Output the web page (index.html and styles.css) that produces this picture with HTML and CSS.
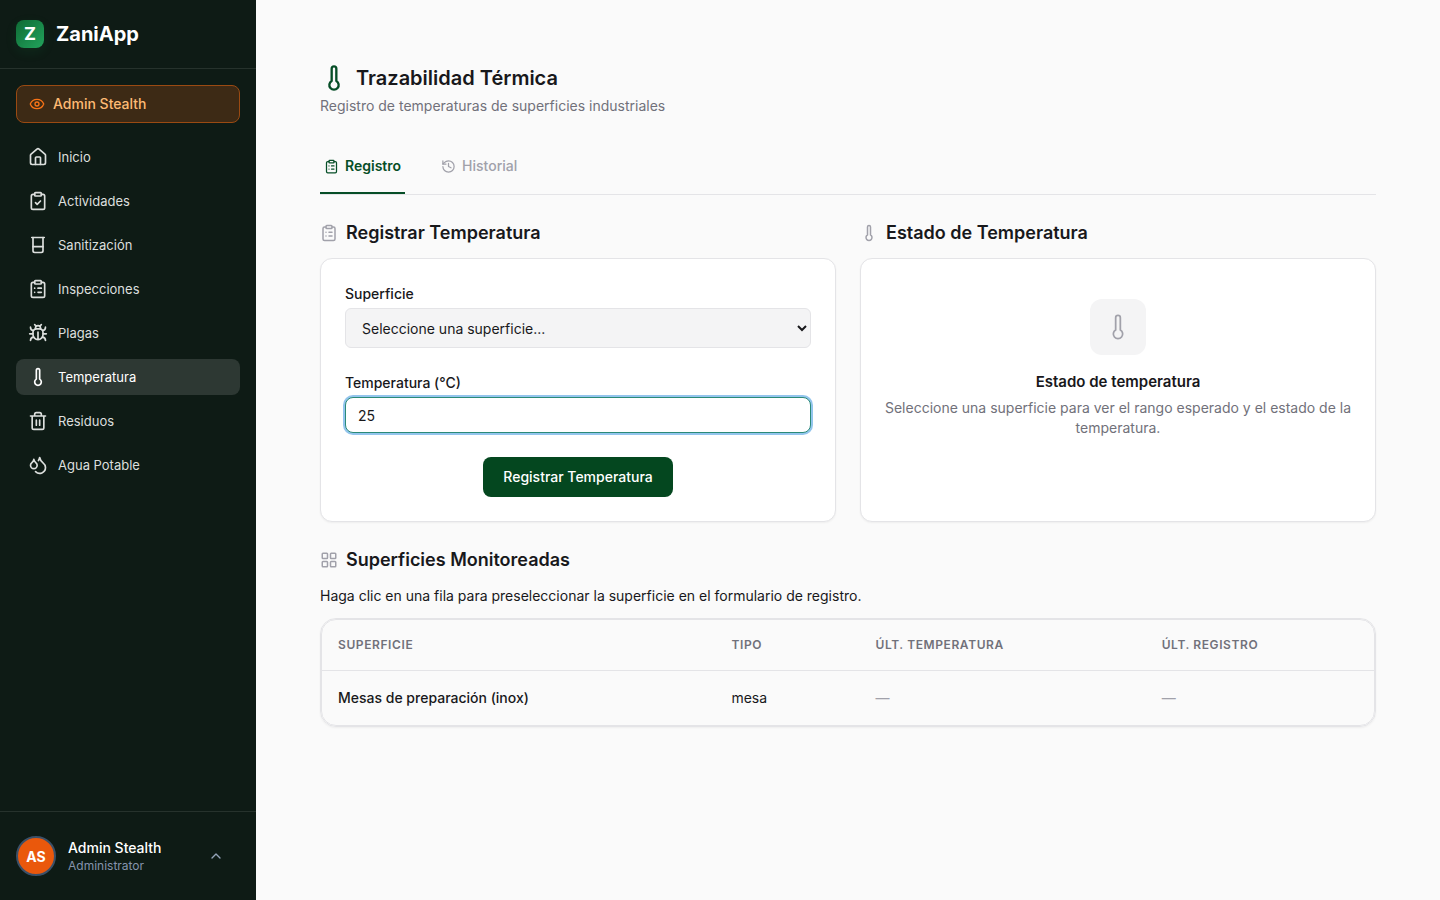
FILE: index.html
```html
<!DOCTYPE html>
<html lang="es">
<head>
    <meta charset="UTF-8">
    <meta name="viewport" content="width=device-width, initial-scale=1.0">
    <title>ZaniApp - Trazabilidad Térmica</title>
    <link rel="stylesheet" href="styles.css">
</head>
<body>

    <!-- Icon set -->
    <svg class="icon-set" aria-hidden="true">
        <symbol id="i-eye" viewBox="0 0 24 24"><path d="M2.06 12.35a1 1 0 0 1 0-.7 10.75 10.75 0 0 1 19.88 0 1 1 0 0 1 0 .7 10.75 10.75 0 0 1-19.88 0"/><circle cx="12" cy="12" r="3"/></symbol>
        <symbol id="i-home" viewBox="0 0 24 24"><path d="M15 21v-8a1 1 0 0 0-1-1h-4a1 1 0 0 0-1 1v8"/><path d="M3 10a2 2 0 0 1 .71-1.53l7-6a2 2 0 0 1 2.58 0l7 6A2 2 0 0 1 21 10v9a2 2 0 0 1-2 2H5a2 2 0 0 1-2-2z"/></symbol>
        <symbol id="i-check" viewBox="0 0 24 24"><rect width="8" height="4" x="8" y="2" rx="1"/><path d="M16 4h2a2 2 0 0 1 2 2v14a2 2 0 0 1-2 2H6a2 2 0 0 1-2-2V6a2 2 0 0 1 2-2h2"/><path d="m9 14 2 2 4-4"/></symbol>
        <symbol id="i-beaker" viewBox="0 0 24 24"><path d="M4.5 3h15"/><path d="M6 3v16a2 2 0 0 0 2 2h8a2 2 0 0 0 2-2V3"/><path d="M6 14h12"/></symbol>
        <symbol id="i-list" viewBox="0 0 24 24"><rect width="8" height="4" x="8" y="2" rx="1"/><path d="M16 4h2a2 2 0 0 1 2 2v14a2 2 0 0 1-2 2H6a2 2 0 0 1-2-2V6a2 2 0 0 1 2-2h2"/><path d="M12 11h4M12 16h4M8 11h.01M8 16h.01"/></symbol>
        <symbol id="i-bug" viewBox="0 0 24 24"><path d="m8 2 1.88 1.88M14.12 3.88 16 2M9 7.13v-1a3 3 0 1 1 6 0v1"/><path d="M12 20c-3.3 0-6-2.7-6-6v-3a4 4 0 0 1 4-4h4a4 4 0 0 1 4 4v3c0 3.3-2.7 6-6 6M12 20v-9"/><path d="M6.53 9C4.6 8.8 3 7.1 3 5M6 13H2M3 21c0-2.1 1.7-3.9 3.8-4M20.97 5c0 2.1-1.6 3.8-3.5 4M22 13h-4M17.2 17c2.1.1 3.8 1.9 3.8 4"/></symbol>
        <symbol id="i-thermo" viewBox="0 0 24 24"><path d="M14 4v10.54a4 4 0 1 1-4 0V4a2 2 0 0 1 4 0Z"/></symbol>
        <symbol id="i-trash" viewBox="0 0 24 24"><path d="M3 6h18M19 6v14a2 2 0 0 1-2 2H7a2 2 0 0 1-2-2V6M8 6V4a2 2 0 0 1 2-2h4a2 2 0 0 1 2 2v2M10 11v6M14 11v6"/></symbol>
        <symbol id="i-drops" viewBox="0 0 24 24"><path d="M7 16.3c2.2 0 4-1.83 4-4.05 0-1.16-.57-2.26-1.71-3.19S7.29 6.75 7 5.3c-.29 1.45-1.14 2.84-2.29 3.76S3 11.1 3 12.25c0 2.22 1.8 4.05 4 4.05z"/><path d="M12.56 6.6A10.97 10.97 0 0 0 14 3.02c.5 2.5 2 4.9 4 6.5s3 3.5 3 5.5a6.98 6.98 0 0 1-11.91 4.97"/></symbol>
        <symbol id="i-history" viewBox="0 0 24 24"><path d="M3 12a9 9 0 1 0 9-9 9.75 9.75 0 0 0-6.74 2.74L3 8"/><path d="M3 3v5h5M12 7v5l4 2"/></symbol>
        <symbol id="i-grid" viewBox="0 0 24 24"><rect width="7" height="7" x="3" y="3" rx="1"/><rect width="7" height="7" x="14" y="3" rx="1"/><rect width="7" height="7" x="14" y="14" rx="1"/><rect width="7" height="7" x="3" y="14" rx="1"/></symbol>
        <symbol id="i-up" viewBox="0 0 24 24"><path d="m18 15-6-6-6 6"/></symbol>
    </svg>

    <div class="layout">
        <!-- Sidebar -->
        <aside class="sidebar">
            <div class="brand">
                <span class="brand-mark">Z</span>
                <span class="brand-name">ZaniApp</span>
            </div>

            <nav class="nav">
                <a class="stealth" href="#"><svg class="icon icon-16"><use href="#i-eye"/></svg>Admin Stealth</a>
                <a class="nav-link" href="#"><svg class="icon icon-20"><use href="#i-home"/></svg>Inicio</a>
                <a class="nav-link" href="#"><svg class="icon icon-20"><use href="#i-check"/></svg>Actividades</a>
                <a class="nav-link" href="#"><svg class="icon icon-20"><use href="#i-beaker"/></svg>Sanitización</a>
                <a class="nav-link" href="#"><svg class="icon icon-20"><use href="#i-list"/></svg>Inspecciones</a>
                <a class="nav-link" href="#"><svg class="icon icon-20"><use href="#i-bug"/></svg>Plagas</a>
                <a class="nav-link active" href="#"><svg class="icon icon-20"><use href="#i-thermo"/></svg>Temperatura</a>
                <a class="nav-link" href="#"><svg class="icon icon-20"><use href="#i-trash"/></svg>Residuos</a>
                <a class="nav-link" href="#"><svg class="icon icon-20"><use href="#i-drops"/></svg>Agua Potable</a>
            </nav>

            <button class="user" type="button">
                <span class="avatar">AS</span>
                <span class="user-info">
                    <span class="user-name">Admin Stealth</span>
                    <span class="user-role">Administrator</span>
                </span>
                <svg class="icon icon-16"><use href="#i-up"/></svg>
            </button>
        </aside>

        <!-- Main Content -->
        <main class="content">
            <header class="page-header">
                <h1><svg class="icon icon-28"><use href="#i-thermo"/></svg>Trazabilidad Térmica</h1>
                <p>Registro de temperaturas de superficies industriales</p>
            </header>

            <div class="tabs">
                <button class="tab active" type="button"><svg class="icon icon-15"><use href="#i-list"/></svg>Registro</button>
                <button class="tab" type="button"><svg class="icon icon-15"><use href="#i-history"/></svg>Historial</button>
            </div>

            <div class="panels">
                <section class="panel">
                    <h2><svg class="icon icon-18"><use href="#i-list"/></svg>Registrar Temperatura</h2>
                    <form class="card form">
                        <div class="field">
                            <label for="superficie">Superficie</label>
                            <select id="superficie">
                                <option>Seleccione una superficie...</option>
                                <option>Mesas de preparación (inox)</option>
                            </select>
                        </div>
                        <div class="field">
                            <label for="temperatura">Temperatura (°C)</label>
                            <input type="text" id="temperatura" inputmode="decimal" value="25">
                        </div>
                        <button class="submit" type="button">Registrar Temperatura</button>
                    </form>
                </section>

                <section class="panel">
                    <h2><svg class="icon icon-18"><use href="#i-thermo"/></svg>Estado de Temperatura</h2>
                    <div class="card empty">
                        <div class="empty-icon"><svg class="icon icon-28"><use href="#i-thermo"/></svg></div>
                        <h3>Estado de temperatura</h3>
                        <p>Seleccione una superficie para ver el rango esperado y el estado de la temperatura.</p>
                    </div>
                </section>
            </div>

            <section class="panel">
                <h2><svg class="icon icon-18"><use href="#i-grid"/></svg>Superficies Monitoreadas</h2>
                <p class="hint">Haga clic en una fila para preseleccionar la superficie en el formulario de registro.</p>
                <div class="table-wrap">
                    <table>
                        <thead>
                            <tr>
                                <th class="col-name">Superficie</th>
                                <th class="col-type">Tipo</th>
                                <th class="col-temp">Últ. Temperatura</th>
                                <th>Últ. Registro</th>
                            </tr>
                        </thead>
                        <tbody>
                            <tr>
                                <td class="name">Mesas de preparación (inox)</td>
                                <td>mesa</td>
                                <td class="none">—</td>
                                <td class="none">—</td>
                            </tr>
                        </tbody>
                    </table>
                </div>
            </section>
        </main>
    </div>

</body>
</html>
```
FILE: styles.css
```css
/* Reset and General Styling */
* {
    margin: 0;
    padding: 0;
    box-sizing: border-box;
}

body {
    font-family: 'Inter', sans-serif;
    font-size: 14px;
    line-height: 21px;
    color: #18181b;
    background: #fafafa;
}

button,
input,
select {
    font: inherit;
    color: inherit;
}

a {
    color: inherit;
    text-decoration: none;
}

/* Icons */
.icon-set {
    display: none;
}

.icon {
    flex-shrink: 0;
    fill: none;
    stroke: currentColor;
    stroke-width: 2;
    stroke-linecap: round;
    stroke-linejoin: round;
}

.icon-15 { width: 15px; height: 15px; }
.icon-16 { width: 16px; height: 16px; }
.icon-18 { width: 18px; height: 18px; }
.icon-20 { width: 20px; height: 20px; }
.icon-28 { width: 28px; height: 28px; }

.layout {
    display: flex;
    min-height: 100vh;
}

/* Sidebar */
.sidebar {
    display: flex;
    flex-direction: column;
    flex-shrink: 0;
    width: 256px;
    background: #0e1b15;
    color: #fff;
}

.brand {
    display: flex;
    align-items: center;
    gap: 12px;
    padding: 20px 16px;
    border-bottom: 1px solid rgba(255, 255, 255, 0.1);
}

.brand-mark {
    width: 28px;
    height: 28px;
    border-radius: 8px;
    background: linear-gradient(135deg, #0f6b35, #22a35c);
    box-shadow: 0 4px 12px rgba(22, 163, 74, 0.1);
    font-size: 18px;
    font-weight: 700;
    line-height: 28px;
    text-align: center;
}

.brand-name {
    font-size: 20px;
    font-weight: 700;
    line-height: 28px;
}

.nav {
    display: flex;
    flex: 1;
    flex-direction: column;
    gap: 8px;
    padding: 16px;
}

.stealth,
.nav-link {
    display: flex;
    align-items: center;
    border-radius: 8px;
    line-height: 20px;
}

.stealth {
    gap: 8px;
    height: 38px;
    margin-bottom: 8px;
    padding: 0 12px;
    border: 1px solid #9a4a12;
    background: #3d2a15;
    color: #fdba74;
    font-weight: 500;
}

.stealth .icon {
    color: #f97316;
}

.nav-link {
    gap: 10px;
    height: 36px;
    padding: 0 12px;
    color: #dcdfdd;
    font-size: 13px;
}

.nav-link.active {
    background: #2d3833;
    color: #fff;
}

.user {
    display: flex;
    align-items: center;
    gap: 12px;
    padding: 24px 32px 24px 16px;
    border: none;
    border-top: 1px solid rgba(255, 255, 255, 0.1);
    background: none;
    text-align: left;
    cursor: pointer;
}

.avatar {
    width: 40px;
    height: 40px;
    border: 2px solid #3b5068;
    border-radius: 50%;
    background: #ea580c;
    font-weight: 700;
    line-height: 37px;
    text-align: center;
}

.user-info {
    display: flex;
    flex: 1;
    flex-direction: column;
}

.user-name {
    font-weight: 500;
    line-height: 20px;
}

.user-role {
    color: #8593ad;
    font-size: 12px;
    line-height: 16px;
}

.user .icon {
    color: #94a3b8;
}

/* Page */
.content {
    flex: 1;
    min-width: 0;
    padding: 64px;
}

.page-header {
    margin-bottom: 24px;
}

h1 {
    display: flex;
    align-items: center;
    gap: 8px;
    margin-bottom: 4px;
    font-size: 20px;
    font-weight: 600;
    line-height: 28px;
}

h1 .icon {
    color: #064e27;
}

.page-header p {
    color: #71717a;
    line-height: 20px;
}

/* Tabs */
.tabs {
    display: flex;
    gap: 32px;
    margin-bottom: 24px;
    border-bottom: 1px solid #e4e4e7;
}

.tab {
    display: flex;
    align-items: center;
    gap: 6px;
    padding: 16px 4px;
    border: none;
    border-bottom: 2px solid transparent;
    background: none;
    color: #a1a1aa;
    font-weight: 500;
    line-height: 20px;
    cursor: pointer;
}

.tab.active {
    border-bottom-color: #064e27;
    color: #064e27;
    font-weight: 600;
}

/* Panels */
.panels {
    display: grid;
    grid-template-columns: 1fr 1fr;
    gap: 24px;
    margin-bottom: 24px;
}

.panel {
    display: flex;
    flex-direction: column;
    gap: 12px;
}

h2 {
    display: flex;
    align-items: center;
    gap: 8px;
    font-size: 18px;
    font-weight: 600;
    line-height: 27px;
}

h2 .icon {
    color: #a1a1aa;
}

.card {
    flex: 1;
    padding: 24px;
    border: 1px solid #e4e4e7;
    border-radius: 12px;
    background: #fff;
    box-shadow: 0 1px 2px rgba(0, 0, 0, 0.05);
}

/* Form */
.form {
    display: flex;
    flex-direction: column;
    gap: 24px;
}

.field {
    display: flex;
    flex-direction: column;
    gap: 4px;
}

.field label {
    font-weight: 500;
}

.field select {
    height: 40px;
    padding: 0 12px;
    border: 1px solid #e4e4e7;
    border-radius: 6px;
    background: #f4f4f5;
}

.field input {
    height: 36px;
    padding: 0 12px;
    border: 1px solid #2b8a78;
    border-radius: 8px;
    outline: none;
    background: #fff;
    box-shadow: 0 0 0 2px #93c5ed;
}

.submit {
    align-self: center;
    height: 40px;
    padding: 0 20px;
    border: none;
    border-radius: 8px;
    background: #04471f;
    color: #fff;
    font-weight: 500;
    line-height: 20px;
    cursor: pointer;
}

/* Empty state */
.empty {
    display: flex;
    flex-direction: column;
    align-items: center;
    padding: 40px 20px;
    text-align: center;
}

.empty-icon {
    display: grid;
    place-items: center;
    width: 56px;
    height: 56px;
    margin-bottom: 16px;
    border-radius: 12px;
    background: #f4f4f5;
    color: #a1a1aa;
}

.empty-icon .icon {
    stroke-width: 1.5;
}

h3 {
    margin-bottom: 6px;
    font-size: 15px;
    font-weight: 600;
    line-height: 21px;
}

.empty p {
    color: #71717a;
    line-height: 20px;
}

/* Table */
.table-wrap {
    overflow: hidden;
    border: 1px solid #e4e4e7;
    border-radius: 16px;
    box-shadow: 0 1px 2px rgba(0, 0, 0, 0.05);
}

table {
    width: 100%;
    border: 1px solid #e4e4e7;
    border-radius: 15px;
    border-spacing: 0;
}

th,
td {
    padding: 16px;
    text-align: left;
}

th {
    border-bottom: 1px solid #e4e4e7;
    color: #71717a;
    font-size: 12px;
    font-weight: 600;
    letter-spacing: 0.05em;
    line-height: 18px;
    text-transform: uppercase;
}

td {
    line-height: 22px;
}

.col-name { width: 37.4%; }
.col-type { width: 13.7%; }
.col-temp { width: 27.2%; }

.name {
    font-weight: 500;
}

.none {
    color: #a1a1aa;
}
```
